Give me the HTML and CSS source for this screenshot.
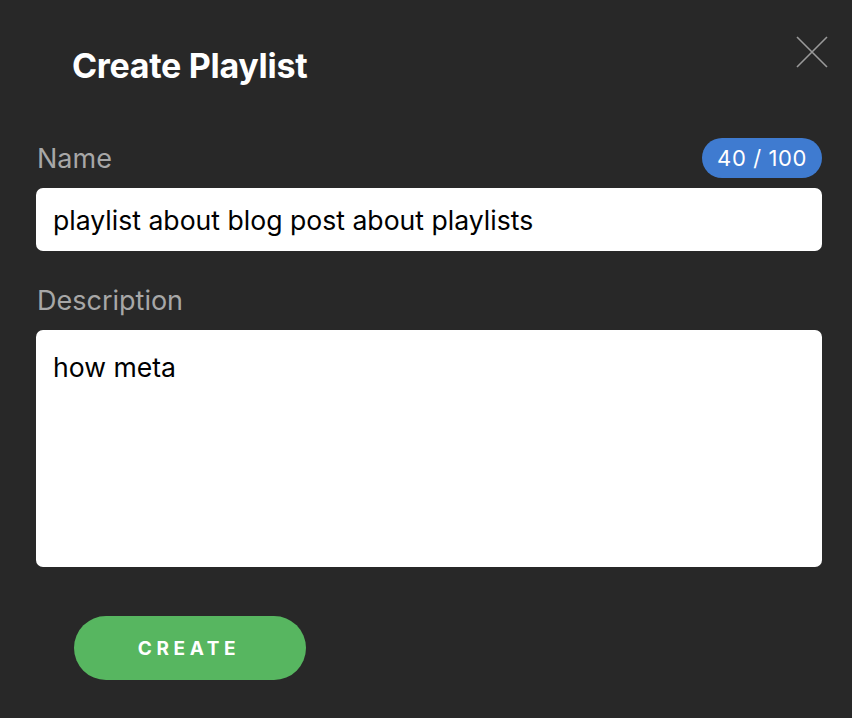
FILE: index.html
```html
<!DOCTYPE html>
<html lang="en">
<head>
<meta charset="utf-8">
<title>Create Playlist</title>
<link rel="stylesheet" href="styles.css">
</head>
<body>
<div class="dialog">
  <header class="head">
    <h1 class="title">Create Playlist</h1>
    <button class="close" aria-label="Close">
      <svg width="32" height="32" viewBox="0 0 32 32"><path d="M1 1 L31 31 M31 1 L1 31" stroke="#9a9a9a" stroke-width="1.6" fill="none"/></svg>
    </button>
  </header>
  <div class="field">
    <div class="label-row">
      <label class="label">Name</label>
      <span class="badge">40 / 100</span>
    </div>
    <div class="input">playlist about blog post about playlists</div>
  </div>
  <div class="field">
    <div class="label-row">
      <label class="label">Description</label>
    </div>
    <div class="textarea">how meta</div>
  </div>
  <div class="actions">
    <button class="create">CREATE</button>
  </div>
</div>
</body>
</html>
```
FILE: styles.css
```css
* { box-sizing: border-box; }
html, body { margin: 0; height: 100%; }
body {
  background: #282828;
  font-family: Inter, "Noto Sans", sans-serif;
}
.dialog {
  padding: 0 30px 0 36px;
}
.head {
  display: flex;
  justify-content: space-between;
  align-items: flex-start;
  height: 138px;
}
.title {
  margin: 46px 0 0 36px;
  color: #fff;
  font-size: 34px;
  line-height: 40px;
  font-weight: 700;
  letter-spacing: -0.3px;
}
.close {
  margin-top: 36px;
  margin-right: -6px;
  background: none;
  border: 0;
  padding: 0;
  width: 32px;
  height: 32px;
}
.label-row {
  display: flex;
  justify-content: space-between;
  align-items: center;
  height: 40px;
  margin-bottom: 10px;
}
.label {
  color: #a7a7a7;
  font-size: 27px;
  padding-left: 1px;
}
.badge {
  background: #3f7bd0;
  color: #fff;
  border-radius: 20px;
  height: 40px;
  line-height: 40px;
  padding: 0 15px;
  font-size: 22px;
  letter-spacing: 0.6px;
}
.input, .textarea {
  background: #fff;
  border-radius: 7px;
  color: #000;
  font-size: 26.6px;
  padding: 0 17px;
}
.input {
  height: 63px;
  line-height: 64px;
  margin-bottom: 29px;
}
.textarea {
  height: 237px;
  padding-top: 21px;
}
.actions {
  padding: 49px 0 0 38px;
}
.create {
  width: 232px;
  height: 64px;
  border: 0;
  border-radius: 32px;
  background: #57b660;
  color: #fff;
  font-family: Inter, "Noto Sans", sans-serif;
  font-weight: 700;
  font-size: 19px;
  letter-spacing: 4.6px;
  padding-left: 4px;
}
```
